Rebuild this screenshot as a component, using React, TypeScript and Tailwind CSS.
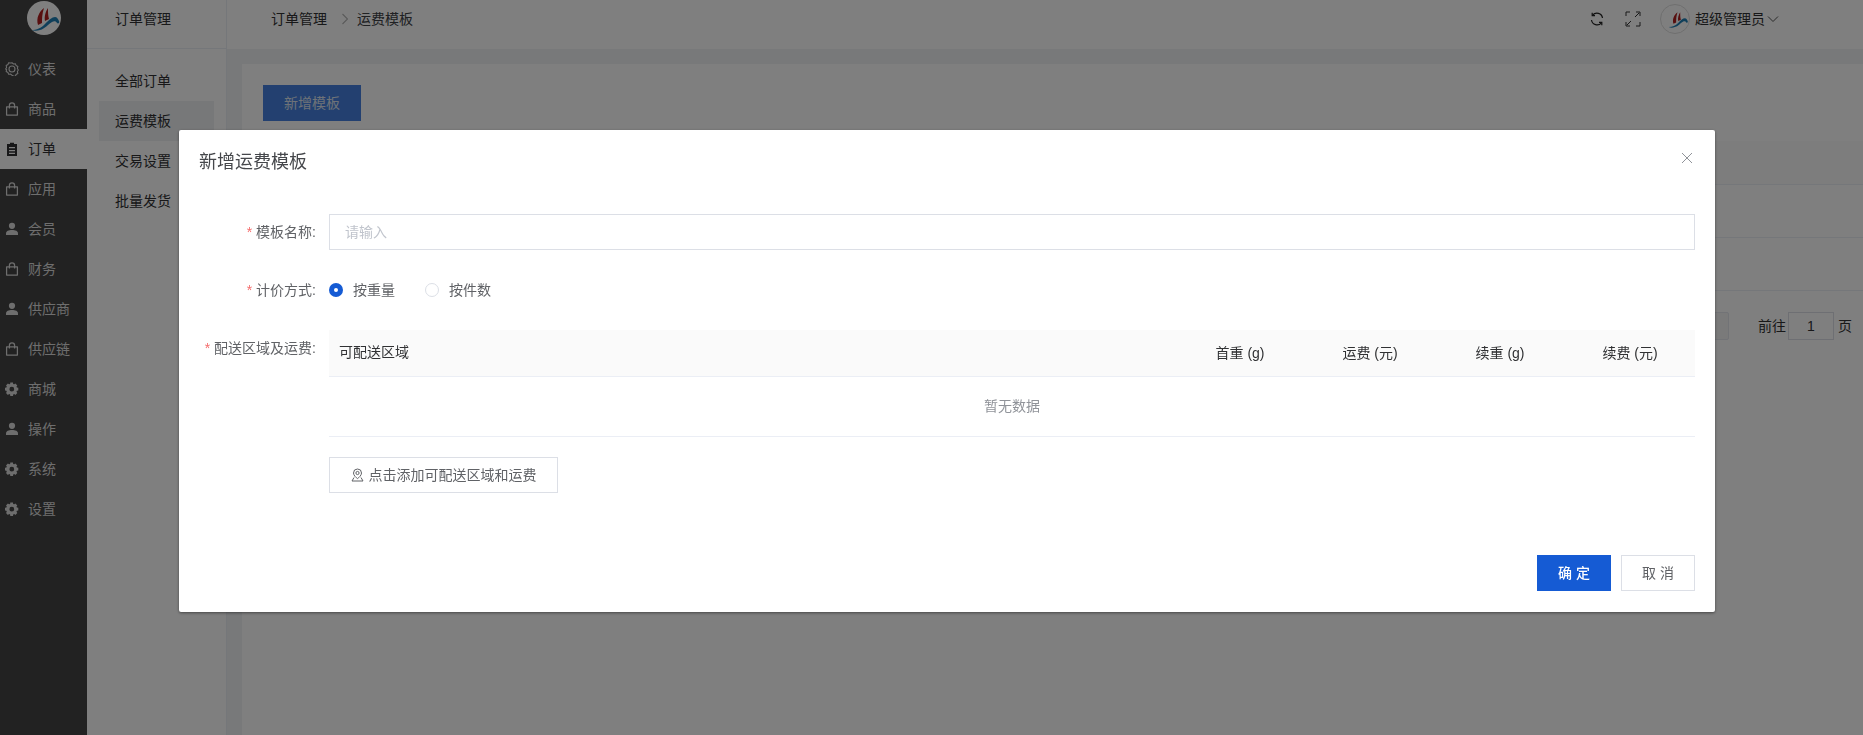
import React from "react";

const Bag = () => (
  <svg width="14" height="14" viewBox="0 0 14 14" fill="none" stroke="currentColor" strokeWidth="1.25">
    <path d="M1.6 13V4.8h10.8V13z" strokeLinejoin="round" />
    <path d="M4.4 6.6V3.4a2.6 2.6 0 0 1 5.2 0v3.2" />
  </svg>
);
const User = () => (
  <svg width="14" height="14" viewBox="0 0 14 14" fill="currentColor">
    <circle cx="7" cy="3.8" r="3.1" />
    <path d="M1 13v-1.6C1 9.2 3.6 8 7 8s6 1.2 6 3.4V13z" />
  </svg>
);
const GEAR =
  "M12.8 5.6l-1.4-.2-.4-1 .8-1.2-1.9-1.9-1.2.8-1-.4L7.5.2h-2.7l-.2 1.5-1 .4-1.2-.8L.5 3.2l.8 1.2-.4 1-1.4.2v2.8l1.4.2.4 1-.8 1.2 1.9 1.9 1.2-.8 1 .4.2 1.4h2.7l.2-1.4 1-.4 1.2.8 1.9-1.9-.8-1.2.4-1 1.4-.2z";
const GearFill = () => (
  <svg width="14" height="14" viewBox="-0.5 -0.2 14 14">
    <path fillRule="evenodd" fill="currentColor" d={GEAR + "M6.3 4.6a2.4 2.4 0 1 1 0 4.8 2.4 2.4 0 0 1 0-4.8z"} />
  </svg>
);
const GearLine = () => (
  <svg width="14" height="14" viewBox="0 0 14 14" fill="none" stroke="currentColor" strokeWidth="1.1">
    <path d="M7 .8l1.5 1.2 1.9-.2.7 1.8 1.7.9-.4 1.9.9 1.6-.9 1.6.4 1.9-1.7.9-.7 1.8-1.9-.2L7 13.2l-1.5-1.2-1.9.2-.7-1.8-1.7-.9.4-1.9L.7 7l.9-1.6-.4-1.9 1.7-.9.7-1.8 1.9.2z" />
    <circle cx="7" cy="7" r="3" />
  </svg>
);
const Clip = () => (
  <svg width="14" height="14" viewBox="0 0 14 14">
    <path
      fillRule="evenodd"
      fill="currentColor"
      d="M2 2h3V.8h4V2h3v12H2zM4 5v1.3h6V5zM4 8v1.3h6V8zM4 10.7V12h6v-1.3z"
    />
  </svg>
);

const Logo = ({ size }: { size: number }) => (
  <svg width={size} height={size} viewBox="0 0 34 34">
    <path d="M11 24C9 17 12 11 17 7c-2 6-2 11-2 15z" fill="#b01e1e" />
    <path d="M18 20c-1-5 1-10 3-13 0 4 0 8 1 11z" fill="#b01e1e" />
    <path d="M4 29c6 0 10-2 14-6s7-7 10-7c2 0 3 2 4 4 1 2-1 3-2 2-1-2-3-2-5-1-4 2-7 7-12 8-3 1-6 1-9 0z" fill="#1f7fb5" />
  </svg>
);

const menu = [
  ["仪表", "line"],
  ["商品", "bag"],
  ["订单", "clip"],
  ["应用", "bag"],
  ["会员", "user"],
  ["财务", "bag"],
  ["供应商", "user"],
  ["供应链", "bag"],
  ["商城", "gear"],
  ["操作", "user"],
  ["系统", "gear"],
  ["设置", "gear"],
];

const MenuIcon = ({ t }: { t: string }) =>
  t === "line" ? <GearLine /> : t === "bag" ? <Bag /> : t === "clip" ? <Clip /> : t === "user" ? <User /> : <GearFill />;

const Required = ({ label }: { label: string }) => (
  <div className="w-[150px] shrink-0 pr-[13px] text-right text-[14px] leading-9 text-[#606266]">
    <span className="mr-1 text-[#f56c6c]">*</span>
    {label}:
  </div>
);

export default function App() {
  return (
    <div
      className="relative flex h-screen w-full overflow-hidden bg-[#f0f2f5] text-[14px] text-[#303133]"
      style={{ fontFamily: '"Liberation Sans","Noto Sans CJK SC",sans-serif' }}
    >
      {/* primary sidebar */}
      <aside className="flex h-full w-[87px] shrink-0 flex-col bg-[#444444] text-[#dcdcdc]">
        <div className="flex h-[49px] shrink-0 justify-center pt-[1px]">
          <div className="h-[34px] w-[34px] overflow-hidden rounded-full bg-white">
            <Logo size={34} />
          </div>
        </div>
        {menu.map(([name, icon]) => (
          <div
            key={name}
            className={
              "flex h-10 shrink-0 items-center gap-[9px] pl-[5px] " +
              (name === "订单" ? "bg-white text-[#303133]" : "")
            }
          >
            <MenuIcon t={icon} />
            <span>{name}</span>
          </div>
        ))}
      </aside>

      {/* secondary sidebar */}
      <aside className="h-full w-[140px] shrink-0 border-r border-[#ebeef5] bg-white">
        <div className="flex h-[49px] items-center border-b border-[#ebeef5] pb-[10px] pl-7">订单管理</div>
        <div className="px-3 pt-3">
          {["全部订单", "运费模板", "交易设置", "批量发货"].map((t) => (
            <div key={t} className={"flex h-10 w-[115px] items-center pl-4 " + (t === "运费模板" ? "bg-[#eff0f3]" : "")}>
              {t}
            </div>
          ))}
        </div>
      </aside>

      {/* main */}
      <main className="flex min-w-0 flex-1 flex-col">
        <header className="flex h-[49px] shrink-0 items-center bg-white pb-[11px] pl-[44px]">
          <span>订单管理</span>
          <svg className="ml-[15px] mr-[9px]" width="6" height="12" viewBox="0 0 6 12" fill="none" stroke="#b4b4b4" strokeWidth="1.1">
            <path d="M0.5 1l5 5-5 5" />
          </svg>
          <span className="text-[#404246]">运费模板</span>
          <div className="ml-auto flex items-center pr-[84px] text-[#303133]">
            <svg className="mr-[1px]" width="14" height="14" viewBox="0 0 14 14" fill="none" stroke="#222" strokeWidth="1.2">
              <path d="M12.5 6A5.6 5.6 0 0 0 2.6 3.2M1.5 8a5.6 5.6 0 0 0 9.9 2.8" />
              <path d="M2.2 0.8v2.8H5M11.8 13.2v-2.8H9" />
            </svg>
            <svg className="ml-[20px]" width="16" height="16" viewBox="0 0 16 16" fill="none" stroke="#333" strokeWidth="1">
              <path d="M1 5V1h4M11 1h4v4M1 11v4h4M11 15h4v-4M10 6l4-4M6 10l-4 4" />
            </svg>
            <div className="ml-[19px] flex h-[30px] w-[30px] items-center rounded-full border border-[#dedede] bg-white pl-[5px]">
              <Logo size={24} />
            </div>
            <span className="ml-[5px]">超级管理员</span>
            <svg className="ml-[2px]" width="12" height="8" viewBox="0 0 12 8" fill="none" stroke="#555" strokeWidth="1">
              <path d="M1 1.5l5 5 5-5" />
            </svg>
          </div>
        </header>
        <div className="min-h-0 flex-1 pl-[15px] pt-[15px]">
          <section className="h-full bg-white pl-[21px] pt-[21px]">
            <button className="h-9 w-[98px] bg-[#4680e0] text-[#dde4f0]">新增模板</button>
            <div className="mt-5 h-[44px] border-b border-[#ebeef5] bg-[#fafafa]" />
            <div className="h-[53px] border-b border-[#ebeef5]" />
            <div className="h-[53px] border-b border-[#ebeef5]" />
            <div className="mt-[21px] flex items-center justify-end pr-[11px]">
              <div className="mr-[29px] h-7 w-[30px] rounded-[2px] border border-[#e4e7ed] bg-[#f4f4f5]" />
              <span>前往</span>
              <div className="ml-[2px] mr-1 flex h-7 w-[46px] items-center justify-center border border-[#dcdfe6]">1</div>
              <span>页</span>
            </div>
          </section>
        </div>
      </main>

      {/* dialog */}
      <div className="fixed inset-0 bg-black/50 pl-[179px] pt-[130px]">
        <div className="relative w-[1536px] rounded-[2px] bg-white pb-[21px] pr-5 shadow-[0_1px_3px_rgba(0,0,0,0.45)]">
          <div className="flex h-[84px] items-start pl-5 pt-[19px] text-[18px] leading-[26px] text-[#45474b]">新增运费模板</div>
          <svg className="absolute right-[23px] top-[23px]" width="10" height="10" viewBox="0 0 10 10" stroke="#909399" strokeWidth="1">
            <path d="M0 0l10 10M10 0L0 10" />
          </svg>

          <div className="flex">
            <Required label="模板名称" />
            <div className="flex h-9 flex-1 items-center border border-[#dcdfe6] pl-[15px] text-[#c0c4cc]">请输入</div>
          </div>

          <div className="mt-[22px] flex">
            <Required label="计价方式" />
            <div className="flex h-9 items-center text-[#606266]">
              <span className="flex h-[14px] w-[14px] items-center justify-center rounded-full bg-[#155bd4]">
                <span className="h-1 w-1 rounded-full bg-white" />
              </span>
              <span className="ml-[10px]">按重量</span>
              <span className="ml-[30px] h-[14px] w-[14px] rounded-full border border-[#dcdfe6]" />
              <span className="ml-[10px]">按件数</span>
            </div>
          </div>

          <div className="mt-[22px] flex">
            <Required label="配送区域及运费" />
            <div className="min-w-0 flex-1">
              <div className="grid h-[47px] grid-cols-[1fr_130px_130px_130px_130px] items-center border-b border-[#ebeef5] bg-[#fafafa] text-[#303133]">
                <div className="pl-[10px] pb-[1px]">可配送区域</div>
                <div className="text-center">首重 (g)</div>
                <div className="text-center">运费 (元)</div>
                <div className="text-center">续重 (g)</div>
                <div className="text-center">续费 (元)</div>
              </div>
              <div className="flex h-[60px] items-center justify-center border-b border-[#ebeef5] text-[#909399]">暂无数据</div>
              <button className="mt-5 flex h-9 w-[229px] items-center justify-center border border-[#dcdfe6] text-[#606266]">
                <svg className="mr-[5px]" width="13" height="14" viewBox="0 0 13 14" fill="none" stroke="#606266" strokeWidth="1">
                  <path d="M6.5 1a4 4 0 0 1 4 4c0 2.4-2.6 4.6-4 5.6-1.4-1-4-3.2-4-5.6a4 4 0 0 1 4-4z" />
                  <circle cx="6.5" cy="5" r="1.6" />
                  <path d="M3 9.5L1 13h11l-2-3.5" />
                </svg>
                点击添加可配送区域和运费
              </button>
            </div>
          </div>

          <div className="mt-[62px] flex justify-end gap-[10px]">
            <button className="h-9 w-[74px] bg-[#155bd4] font-medium text-white">确 定</button>
            <button className="h-9 w-[74px] border border-[#dcdfe6] bg-white text-[#606266]">取 消</button>
          </div>
        </div>
      </div>
    </div>
  );
}
